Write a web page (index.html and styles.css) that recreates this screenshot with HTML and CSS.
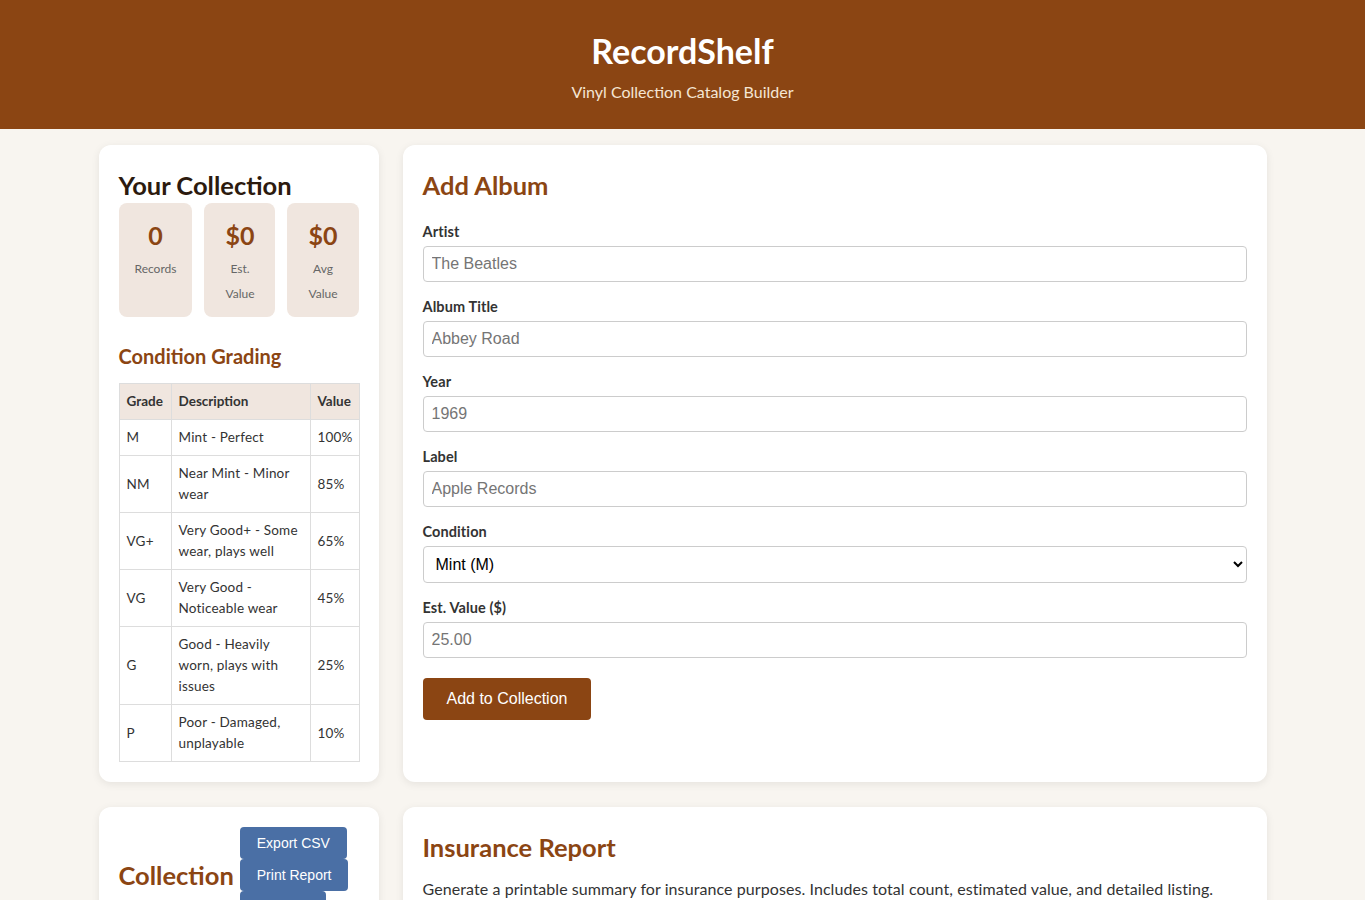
FILE: index.html
```html
<!DOCTYPE html>
<html lang="en">
<head>
<meta charset="UTF-8" />
<meta name="viewport" content="width=device-width, initial-scale=1" />
<title>RecordShelf</title>
<link rel="stylesheet" href="styles.css">
</head>
<body>

<header class="site-header">
  <h1>RecordShelf</h1>
  <p>Vinyl Collection Catalog Builder</p>
</header>

<main class="container">
  <aside class="card">
    <h2 class="side-title">Your Collection</h2>
    <div class="stats">
      <div class="stat">
        <div class="stat-num">0</div>
        <div class="stat-label">Records</div>
      </div>
      <div class="stat">
        <div class="stat-num">$0</div>
        <div class="stat-label">Est. Value</div>
      </div>
      <div class="stat">
        <div class="stat-num">$0</div>
        <div class="stat-label">Avg Value</div>
      </div>
    </div>

    <h3>Condition Grading</h3>
    <table class="grades">
      <colgroup>
        <col class="col-grade">
        <col class="col-desc">
        <col class="col-value">
      </colgroup>
      <thead>
        <tr><th>Grade</th><th>Description</th><th>Value</th></tr>
      </thead>
      <tbody>
        <tr><td>M</td><td>Mint - Perfect</td><td>100%</td></tr>
        <tr><td>NM</td><td>Near Mint - Minor wear</td><td>85%</td></tr>
        <tr><td>VG+</td><td>Very Good+ - Some wear, plays well</td><td>65%</td></tr>
        <tr><td>VG</td><td>Very Good - Noticeable wear</td><td>45%</td></tr>
        <tr><td>G</td><td>Good - Heavily worn, plays with issues</td><td>25%</td></tr>
        <tr><td>P</td><td>Poor - Damaged, unplayable</td><td>10%</td></tr>
      </tbody>
    </table>
  </aside>

  <section class="card">
    <h2>Add Album</h2>
    <form class="album-form" onsubmit="return false;">
      <div class="form-group">
        <label for="artist">Artist</label>
        <input id="artist" type="text" placeholder="The Beatles">
      </div>
      <div class="form-group">
        <label for="title">Album Title</label>
        <input id="title" type="text" placeholder="Abbey Road">
      </div>
      <div class="form-group">
        <label for="year">Year</label>
        <input id="year" type="text" placeholder="1969">
      </div>
      <div class="form-group">
        <label for="label">Label</label>
        <input id="label" type="text" placeholder="Apple Records">
      </div>
      <div class="form-group">
        <label for="condition">Condition</label>
        <select id="condition">
          <option>Mint (M)</option>
          <option>Near Mint (NM)</option>
          <option>Very Good+ (VG+)</option>
          <option>Very Good (VG)</option>
          <option>Good (G)</option>
          <option>Poor (P)</option>
        </select>
      </div>
      <div class="form-group">
        <label for="value">Est. Value ($)</label>
        <input id="value" type="text" placeholder="25.00">
      </div>
      <button class="btn-primary" type="submit">Add to Collection</button>
    </form>
  </section>

  <section class="card">
    <div class="list-head">
      <h2>Collection</h2>
      <div class="actions">
        <button class="btn-blue">Export CSV</button>
        <button class="btn-blue">Print Report</button>
        <button class="btn-blue">Clear All</button>
      </div>
    </div>
  </section>

  <section class="card">
    <h2 class="report-title">Insurance Report</h2>
    <p class="report-text">Generate a printable summary for insurance purposes. Includes total count, estimated value, and detailed listing.</p>
  </section>
</main>

</body>
</html>
```

FILE: styles.css
```css
/* base */
body {
  margin: 0;
  background: #f8f5f0;
  color: #333;
  font-family: 'Lato', 'Noto Sans', sans-serif;
  line-height: 1.6;
}

/* header */
.site-header {
  background: #8b4513;
  color: #fff;
  text-align: center;
  padding: 29px 16px 24px;
}
.site-header h1 {
  margin: 0;
  font-size: 34px;
  line-height: 44px;
  font-weight: 700;
}
.site-header p {
  margin: 6px 0 0;
  font-size: 16px;
  line-height: 26px;
  color: #f5e6d3;
}

/* layout */
.container {
  max-width: 1168px;
  margin: 16px auto 0;
  display: grid;
  grid-template-columns: 280px 1fr;
  gap: 25px 24px;
}
.card {
  background: #fff;
  border-radius: 12px;
  padding: 20px;
  box-shadow: 0 2px 8px rgba(0,0,0,0.08);
}
.card h2 {
  margin: 1px 0 17px;
  font-size: 25.5px;
  line-height: 38px;
  color: #8b4513;
}
.card .side-title {
  margin-bottom: -1px;
  color: #2c1a0e;
}

/* stats */
.stats {
  display: grid;
  grid-template-columns: repeat(3, 1fr);
  gap: 12px;
}
.stat {
  background: #f0e6df;
  border-radius: 8px;
  padding: 11px 16px;
  text-align: center;
}
.stat-num {
  font-size: 25px;
  font-weight: 700;
  line-height: 42px;
  color: #8b4513;
}
.stat-label {
  font-size: 12px;
  line-height: 25px;
  color: #666;
}

/* grading table */
.card h3 {
  margin: 25px 0 13px;
  font-size: 20px;
  line-height: 28px;
  color: #8b4513;
}
.grades {
  width: 100%;
  table-layout: fixed;
  border-collapse: collapse;
  font-size: 13.5px;
  line-height: 21px;
  letter-spacing: 0.2px;
}
.grades th,
.grades td {
  border: 1px solid #ddd;
  padding: 7px;
  text-align: left;
  vertical-align: middle;
}
.grades th {
  background: #f0e6df;
  font-weight: 700;
  letter-spacing: 0;
}
.grades .col-grade { width: 52px; }
.grades .col-desc { width: 139px; }
.grades .col-value { width: 49px; }

/* form */
.form-group {
  margin-bottom: 14px;
}
.form-group label {
  display: block;
  font-size: 14.5px;
  line-height: 22px;
  font-weight: 700;
  letter-spacing: 0.1px;
  color: #333;
  margin-bottom: 3px;
}
.form-group input,
.form-group select {
  width: 100%;
  height: 36px;
  box-sizing: border-box;
  font-family: 'Liberation Sans', Arial, sans-serif;
  font-size: 16px;
  padding: 0 8px;
  border: 1px solid #ccc;
  border-radius: 4px;
  background: #fff;
  color: #000;
}
.form-group input::placeholder {
  color: #757575;
}
.form-group select {
  height: 37px;
}
.btn-primary {
  margin-top: 6px;
  background: #8b4513;
  color: #fff;
  border: none;
  border-radius: 4px;
  padding: 12px 24px;
  font-family: 'Liberation Sans', Arial, sans-serif;
  font-size: 16px;
  cursor: pointer;
}

/* collection list */
.list-head {
  display: flex;
  align-items: center;
  gap: 6px;
}
.list-head h2 {
  margin: 0;
}
.actions {
  flex: 1;
}
.btn-blue {
  display: block;
  background: #4a6fa5;
  color: #fff;
  border: none;
  border-radius: 4px;
  padding: 8px 17px;
  font-family: 'Liberation Sans', Arial, sans-serif;
  font-size: 14px;
  cursor: pointer;
}

/* insurance */
.card .report-title {
  margin-bottom: 10px;
}
.report-text {
  margin: 0;
  font-size: 16px;
  letter-spacing: 0.08px;
}
```
